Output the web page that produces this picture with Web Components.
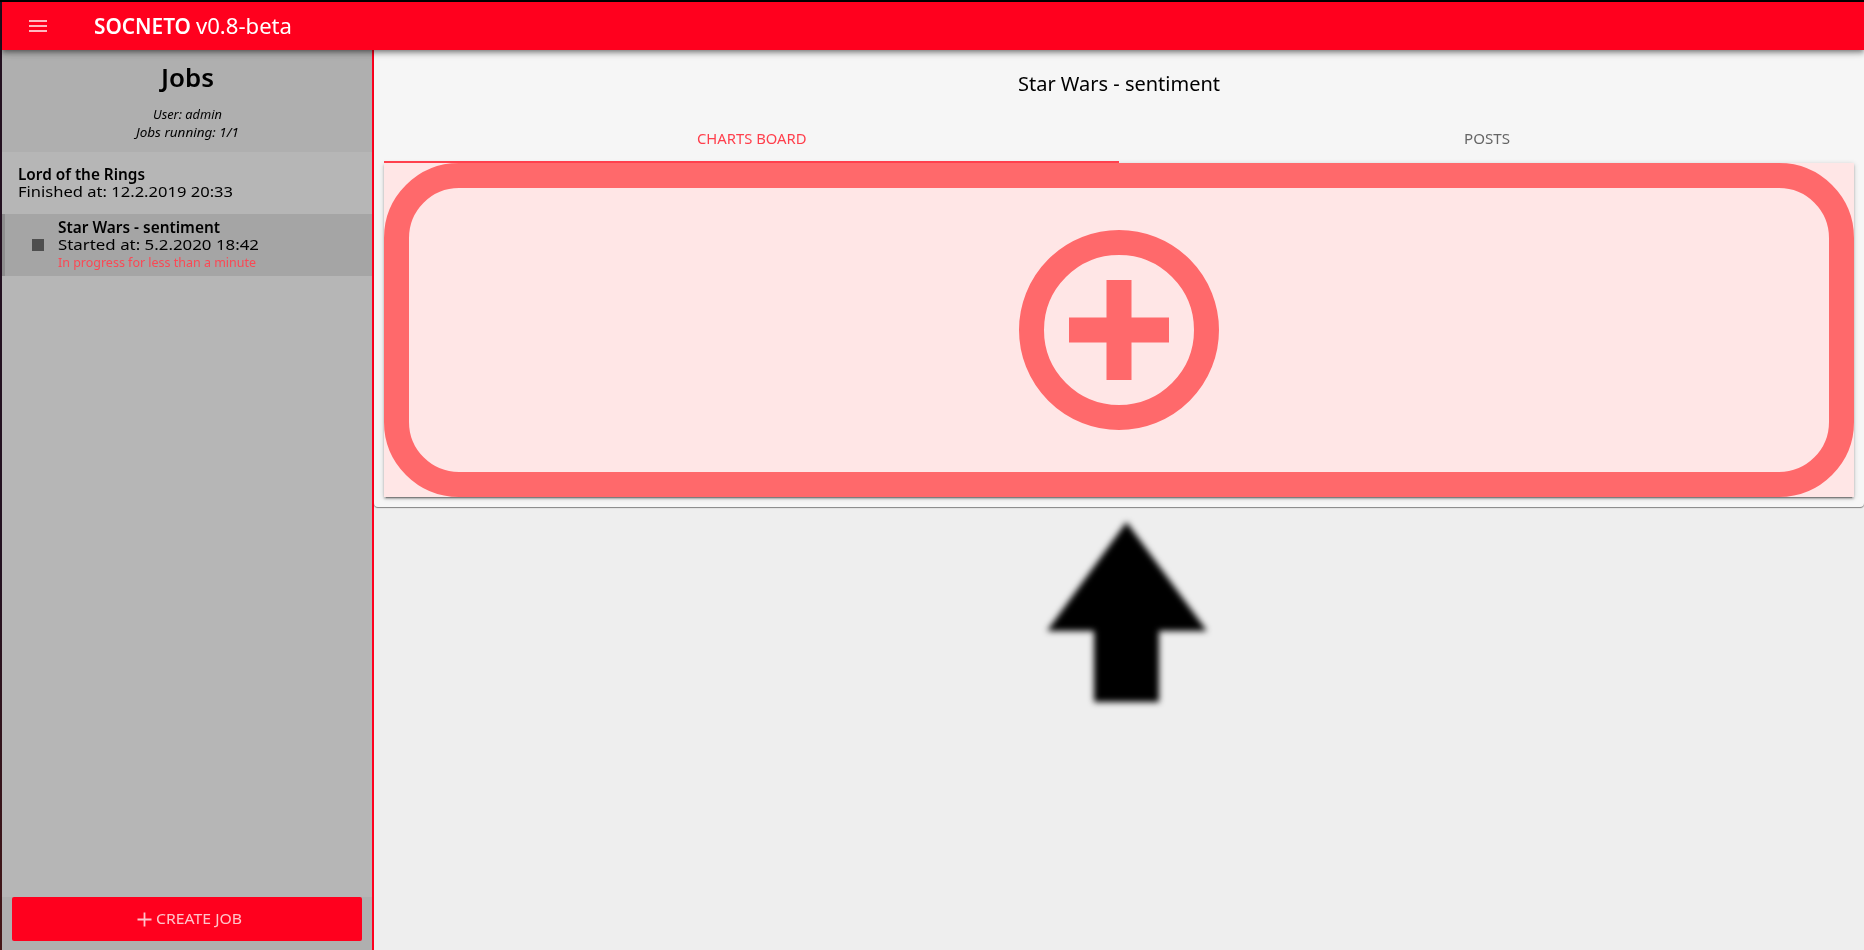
<!DOCTYPE html>
<html lang="en">
<head>
<meta charset="utf-8">
<title>SOCNETO</title>
<style>
html,body{margin:0;height:100%;overflow:hidden;background:#eee;font-family:"Noto Sans","Open Sans",sans-serif;color:#000}
</style>
</head>
<body>
<socneto-app></socneto-app>
<script>
const define=(name,html,setup)=>{
  const t=document.createElement('template');t.innerHTML=html;
  customElements.define(name,class extends HTMLElement{
    constructor(){super();this.attachShadow({mode:'open'}).append(t.content.cloneNode(true));}
    connectedCallback(){if(setup)setup(this,this.shadowRoot);}
  });
};

// A line of text stretched so that it takes up the width given in `fit`.
define('fit-text',`<style>:host{display:inline-block;white-space:pre}span{display:inline-block;transform-origin:0 50%}</style><span><slot></slot></span>`,(el,root)=>{
  const span=root.querySelector('span'),target=parseFloat(el.getAttribute('fit'));
  span.style.transform='scaleX('+target/span.getBoundingClientRect().width+')';
  el.style.width=target+'px';
});

define('app-header',`<style>
:host{display:flex;align-items:center;height:48px;flex:none;background:#ff001e;color:#fff;position:relative;z-index:2;box-shadow:0 2px 4px -1px rgba(0,0,0,.3),0 4px 5px rgba(0,0,0,.2),0 1px 10px rgba(0,0,0,.16);font-size:21px;line-height:48px;padding-left:27px;box-sizing:border-box}
svg{width:18px;height:12px;margin-right:47px}
b{font-weight:600;margin-right:5px}b,span{height:48px}
</style><svg viewBox="0 0 18 12" fill="#ffb9c1"><path d="M0 0h18v2H0zM0 5h18v2H0zM0 10h18v2H0z"/></svg><b><fit-text fit="97">SOCNETO</fit-text></b><span><fit-text fit="96">v0.8-beta</fit-text></span>`);

define('job-item',`<style>
:host{display:flex;align-items:flex-start;height:62px;box-sizing:border-box;padding:14px 0 0 16px;font-size:15.2px;line-height:17px}
:host([selected]){background:#a5a5a5;border-left:3px solid #8e8e8e;padding:5px 0 0 27px}
i{display:none;width:12px;height:12px;background:#4e4e4e;margin:20px 14px 0 0}
:host([selected]) i{display:block}
div{display:flex;flex-direction:column;align-items:flex-start}
::slotted([slot=name]){font-weight:600}
::slotted([slot=note]){font-size:11.8px;line-height:18.5px;color:#fb4854}
</style><i></i><div><slot name="name"></slot><slot name="time"></slot><slot name="note"></slot></div>`);

define('create-button',`<style>
:host{display:flex;justify-content:center;align-items:center;height:44px;border-radius:2px;background:#ff001e;color:#ffc4ca;font-size:15px;line-height:42px}
svg{width:15px;height:15px;margin:0 4px 0 5px}fit-text{height:44px}
</style><svg viewBox="0 0 15 15" fill="none" stroke="#ffc4ca" stroke-width="1.8"><path d="M7.5.5v14M.5 7.5h14"/></svg><fit-text fit="86">CREATE JOB</fit-text>`);

define('jobs-panel',`<style>
:host{display:flex;flex-direction:column;width:372px;flex:none;box-sizing:border-box;border-right:2px solid #ff001e;background:#b6b6b6}
header{height:102px;box-sizing:border-box;padding-top:12px;background:#afafaf;display:flex;flex-direction:column;align-items:center}
h1{font-size:25px;line-height:30px;font-weight:600;margin:0 0 14px}
p{margin:0;font-size:12px;line-height:18px;font-style:italic}
main{flex:1}footer{background:#afafaf;padding:0 10px 9px}
</style>
<header><h1><fit-text fit="53">Jobs</fit-text></h1><p><fit-text fit="69">User: admin</fit-text></p><p><fit-text fit="103">Jobs running: 1/1</fit-text></p></header>
<main>
<job-item><fit-text slot="name" fit="127">Lord of the Rings</fit-text><fit-text slot="time" fit="215">Finished at: 12.2.2019 20:33</fit-text></job-item>
<job-item selected><fit-text slot="name" fit="162">Star Wars - sentiment</fit-text><fit-text slot="time" fit="201">Started at: 5.2.2020 18:42</fit-text><fit-text slot="note" fit="198">In progress for less than a minute</fit-text></job-item>
</main>
<footer><create-button></create-button></footer>`);

define('tab-item',`<style>
:host{display:flex;flex:1;justify-content:center;height:49px;box-sizing:border-box;border-bottom:2px solid transparent;font-size:15.3px;line-height:49px;color:#666}
:host([active]){color:#ff3f4c;border-color:#ff404d}
</style><slot></slot>`);

define('add-chart',`<style>
:host{display:block;height:334px;background:#ffe6e6;box-shadow:0 2px 2px rgba(0,0,0,.2),0 3px 1px -2px rgba(0,0,0,.3),0 1px 5px rgba(0,0,0,.18)}
.frame{height:100%;box-sizing:border-box;border:25px solid #ff696b;border-radius:75px;display:flex;align-items:center;justify-content:center}
svg{width:200px;height:200px}
</style><div class="frame"><svg viewBox="0 0 200 200"><circle cx="100" cy="100" r="87.5" fill="none" stroke="#ff696b" stroke-width="25"/><path fill="#ff696b" d="M87.5 50h25v37.5H150v25h-37.5V150h-25v-37.5H50v-25h37.5z"/></svg></div>`);

define('job-board',`<style>
:host{display:block;box-sizing:border-box;height:457px;padding:13px 10px 10px;background:#f6f6f6;border-radius:0 0 4px 4px;box-shadow:0 1px 1px rgba(0,0,0,.45)}
h2{margin:0 0 11px;padding-right:3px;text-align:center;font-size:19.7px;line-height:41px;height:40px;font-weight:400}
nav{display:flex}
</style><h2><fit-text fit="202">Star Wars - sentiment</fit-text></h2>
<nav><tab-item active><fit-text fit="109.5">CHARTS BOARD</fit-text></tab-item><tab-item><fit-text fit="46">POSTS</fit-text></tab-item></nav><add-chart></add-chart>`);

define('up-pointer',`<style>:host{display:block;position:absolute;left:664px;top:460px;width:180px;height:210px}svg{display:block}</style>
<svg width="180" height="210" viewBox="1038 510 180 210"><defs><filter id="soft"><feGaussianBlur stdDeviation="3"/></filter></defs><path filter="url(#soft)" d="M1126.5 522L1207 631H1159V702H1094V631H1047z"/></svg>`);

define('socneto-app',`<style>
:host{display:flex;flex-direction:column;height:100vh;box-sizing:border-box;border-top:2px solid #000;padding-left:2px;background:linear-gradient(#eee,#eee) 2px 0 no-repeat,linear-gradient(#231020 60%,#451717)}
.body{display:flex;flex:1;min-height:0}.content{flex:1;position:relative}
</style><app-header></app-header><div class="body"><jobs-panel></jobs-panel><div class="content"><job-board></job-board><up-pointer></up-pointer></div></div>`);
</script>
</body>
</html>
